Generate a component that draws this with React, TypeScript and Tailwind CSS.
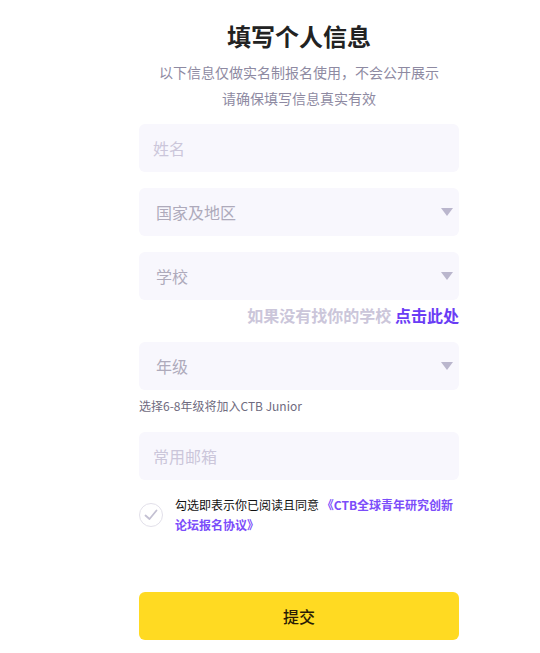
import React from "react";

const font = { fontFamily: '"Noto Sans CJK SC", "Noto Sans", sans-serif' };

function Caret() {
  return (
    <svg width="12" height="8" viewBox="0 0 12 8" className="shrink-0">
      <path d="M0 0 H12 L6 8 Z" fill="#bab6cd" />
    </svg>
  );
}

function TextInput({ placeholder }: { placeholder: string }) {
  return (
    <div className="h-[48px] w-full rounded-[6px] bg-[#f8f7fd] flex items-center pl-[14px]">
      <span className="text-[16px] text-[#cbc6da]">{placeholder}</span>
    </div>
  );
}

function SelectInput({ placeholder }: { placeholder: string }) {
  return (
    <div className="h-[48px] w-full rounded-[6px] bg-[#f8f7fd] flex items-center justify-between pl-[17px] pr-[6px]">
      <span className="text-[16px] text-[#aeaabb]">{placeholder}</span>
      <Caret />
    </div>
  );
}

export default function App() {
  return (
    <div className="w-[540px] h-[653px] bg-white overflow-hidden" style={font}>
      <div className="ml-[139px] w-[320px] flex flex-col">
        <h1 className="mt-[19px] text-center text-[24px] leading-[34px] font-bold text-[#222222]">
          填写个人信息
        </h1>
        <p className="mt-[6px] text-center text-[14px] leading-[26px] text-[#8e8aa2]">
          以下信息仅做实名制报名使用，不会公开展示
          <br />
          请确保填写信息真实有效
        </p>
        <div className="mt-[13px]">
          <TextInput placeholder="姓名" />
        </div>
        <div className="mt-[16px]">
          <SelectInput placeholder="国家及地区" />
        </div>
        <div className="mt-[16px]">
          <SelectInput placeholder="学校" />
        </div>
        <div className="mt-[3px] text-right text-[16px] leading-[24px] font-bold">
          <span className="text-[#cbc6da]">如果没有找你的学校 </span>
          <span className="text-[#6a3df5]">点击此处</span>
        </div>
        <div className="mt-[15px]">
          <SelectInput placeholder="年级" />
        </div>
        <p className="mt-[8px] text-[12px] leading-[16px] text-[#6f6b80]">
          选择6-8年级将加入CTB Junior
        </p>
        <div className="mt-[18px]">
          <TextInput placeholder="常用邮箱" />
        </div>
        <div className="mt-[15px] flex items-center gap-[12px]">
          <div className="w-[24px] h-[24px] rounded-full border border-[#e2e0ea] flex items-center justify-center shrink-0">
            <svg width="14" height="12" viewBox="0 0 14 12">
              <path d="M1.5 6.5 L5.5 10 L12.5 1.5" fill="none" stroke="#c3c0d2" strokeWidth="1.8" strokeLinecap="round" strokeLinejoin="round" />
            </svg>
          </div>
          <p className="text-[12px] leading-[20px] text-[#111111]">
            勾选即表示你已阅读且同意{" "}
            <span className="font-bold text-[#7b4dfa]">《CTB全球青年研究创新论坛报名协议》</span>
          </p>
        </div>
        <button className="mt-[57px] h-[48px] w-full rounded-[6px] bg-[#ffda22] text-[16px] font-medium text-[#2a1c05]">
          提交
        </button>
      </div>
    </div>
  );
}
